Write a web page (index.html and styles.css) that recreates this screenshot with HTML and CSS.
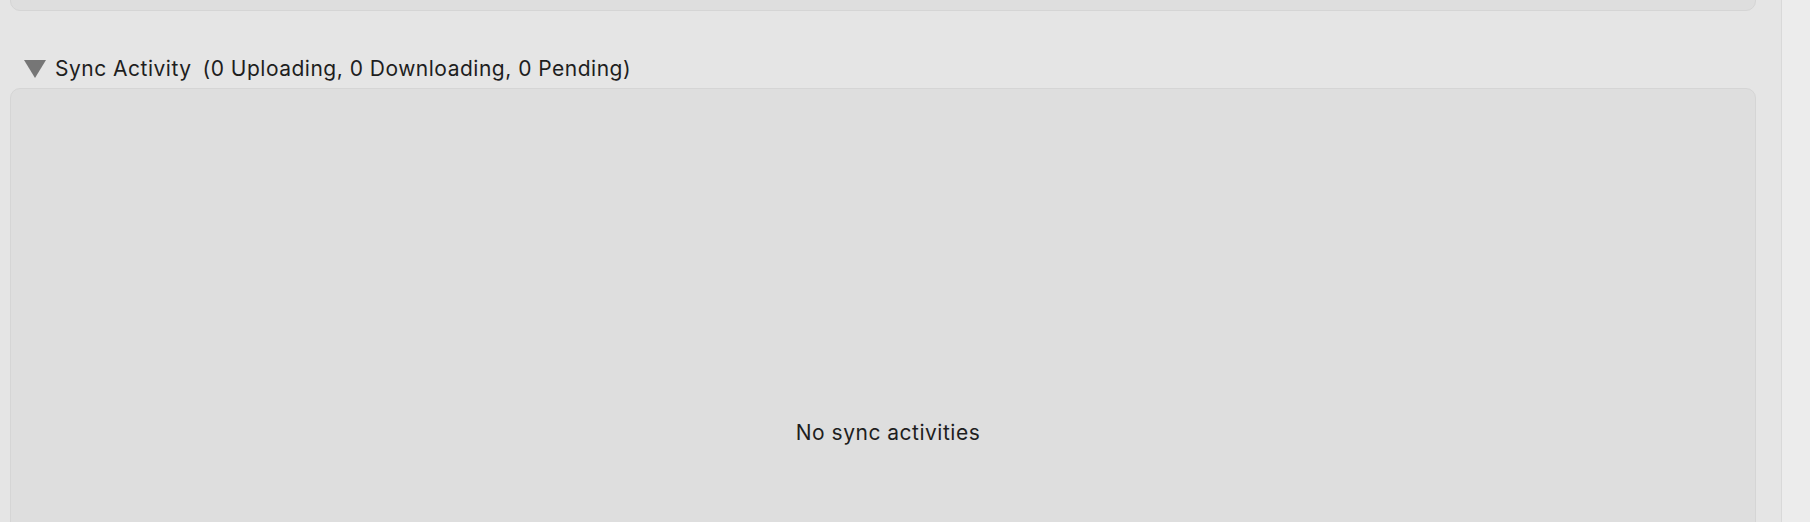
FILE: index.html
```html
<!DOCTYPE html>
<html lang="en">
<head>
    <meta charset="UTF-8">
    <meta name="viewport" content="width=device-width, initial-scale=1.0">
    <title>Sync Activity</title>
    <link rel="stylesheet" href="styles.css">
</head>
<body>
    <div class="window">
        <div class="content">
            <div class="panel panel-top"></div>

            <div class="section-header">
                <span class="disclosure"></span>
                <span class="section-title">Sync Activity</span>
                <span class="section-counts">(0 Uploading, 0 Downloading, 0 Pending)</span>
            </div>

            <div class="panel activity-list">
                <p class="empty">No sync activities</p>
            </div>
        </div>
        <div class="scrollbar"></div>
    </div>
</body>
</html>
```

FILE: styles.css
```css
body {
    font-family: Inter, "Noto Sans", sans-serif;
    background-color: #e5e5e5;
    margin: 0;
    padding: 0;
    height: 100vh;
    overflow: hidden;
    color: #1e1e1e;
    letter-spacing: 0.5px;
}

.window {
    display: flex;
    height: 100%;
}

.content {
    flex: 1;
    padding: 0 25px 0 10px;
}

.panel {
    background-color: #dedede;
    border: 1px solid #d5d5d5;
    border-radius: 10px;
}

.panel-top {
    height: 49px;
    margin-top: -40px;
}

.section-header {
    display: flex;
    align-items: center;
    height: 26px;
    margin: 45px 0 6px;
    padding-left: 14px;
    font-size: 21px;
    line-height: 26px;
}

.disclosure {
    width: 0;
    height: 0;
    border-left: 11px solid transparent;
    border-right: 11px solid transparent;
    border-top: 18px solid #767676;
    margin-right: 9px;
}

.section-counts {
    margin-left: 11px;
}

.activity-list {
    height: 690px;
    padding-top: 331px;
    box-sizing: border-box;
}

.empty {
    margin: 0;
    padding-left: 10px;
    text-align: center;
    font-size: 21px;
    line-height: 26px;
}

.scrollbar {
    width: 28px;
    background-color: #ececec;
    border-left: 1px solid #d9d9d9;
}
```
